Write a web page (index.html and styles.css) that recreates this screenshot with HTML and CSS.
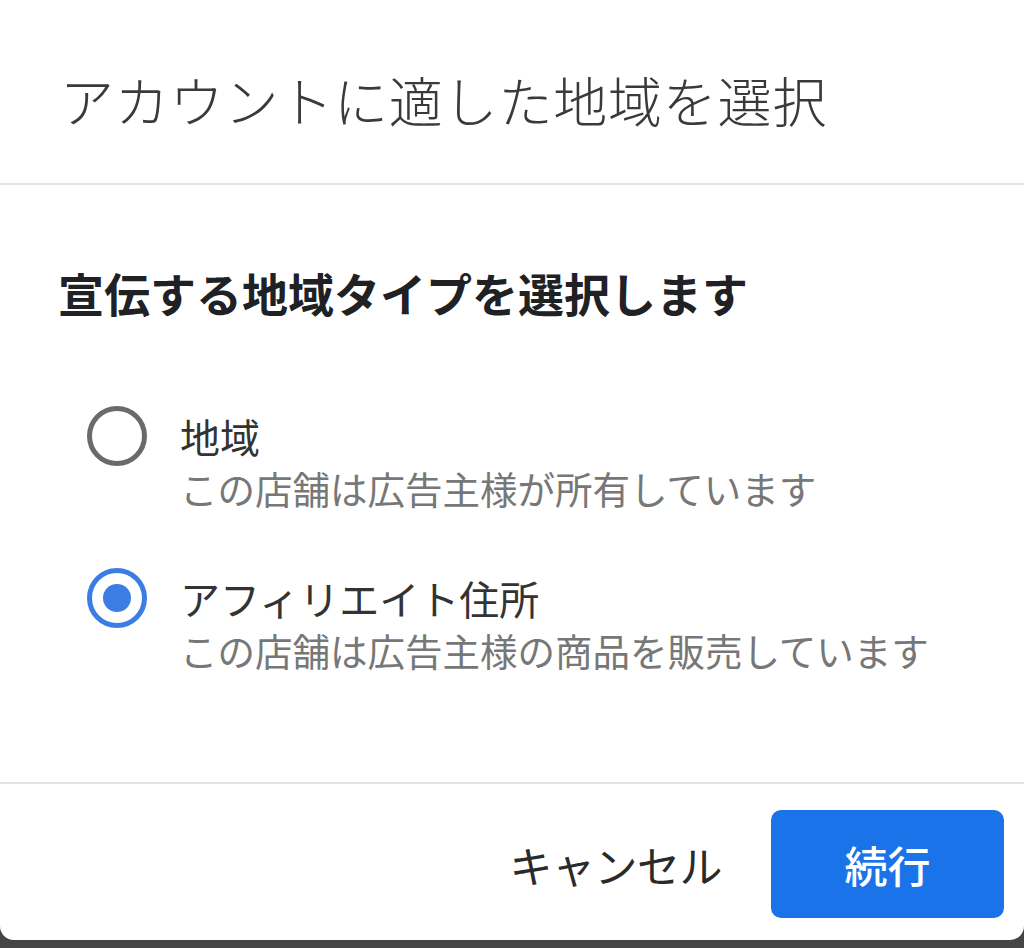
FILE: index.html
```html
<!DOCTYPE html>
<html lang="ja">
<head>
<meta charset="utf-8">
<title>アカウントに適した地域を選択</title>
<link rel="stylesheet" href="styles.css">
</head>
<body>
<div class="dialog">
  <header class="header">
    <h1 class="title">アカウントに適した地域を選択</h1>
  </header>
  <main class="content">
    <h2 class="subtitle">宣伝する地域タイプを選択します</h2>
    <div class="options">
      <label class="option">
        <span class="radio"></span>
        <span class="text">
          <span class="label">地域</span>
          <span class="desc">この店舗は広告主様が所有しています</span>
        </span>
      </label>
      <label class="option">
        <span class="radio checked"></span>
        <span class="text">
          <span class="label">アフィリエイト住所</span>
          <span class="desc">この店舗は広告主様の商品を販売しています</span>
        </span>
      </label>
    </div>
  </main>
  <footer class="footer">
    <button class="btn-cancel">キャンセル</button>
    <button class="btn-primary">続行</button>
  </footer>
</div>
</body>
</html>
```

FILE: styles.css
```css
html, body {
  margin: 0;
  padding: 0;
}
body {
  background: #454545;
  font-family: "Noto Sans CJK JP", "Noto Sans", sans-serif;
  height: 948px;
  overflow: hidden;
}
.dialog {
  background: #fff;
  height: 940px;
  display: flex;
  flex-direction: column;
  border-radius: 0 0 14px 14px;
}
.header {
  height: 185px;
  box-sizing: border-box;
  padding: 73px 0 0 60px;
  border-bottom: 2px solid #e3e3e3;
}
.title {
  margin: 0;
  font-size: 54px;
  line-height: 54px;
  font-weight: 300;
  color: #3a3a3a;
  letter-spacing: 0.8px;
}
.content {
  flex: 1;
  padding: 84px 0 0 58px;
}
.subtitle {
  margin: 0;
  font-size: 46px;
  line-height: 46px;
  font-weight: 700;
  color: #202124;
}
.options {
  margin-top: 97px;
  display: flex;
  flex-direction: column;
  gap: 58px;
}
.option {
  display: flex;
  align-items: flex-start;
}
.radio {
  width: 60px;
  height: 60px;
  box-sizing: border-box;
  border: 5px solid #6a6a6a;
  border-radius: 50%;
  margin: -6px 0 0 29px;
  flex: none;
  display: flex;
  align-items: center;
  justify-content: center;
}
.radio.checked {
  border-color: #3b7de3;
}
.radio.checked::after {
  content: "";
  width: 28px;
  height: 28px;
  border-radius: 50%;
  background: #3b7de3;
}
.text {
  margin-left: 33px;
  display: flex;
  flex-direction: column;
}
.label {
  font-size: 40px;
  line-height: 48px;
  color: #333;
}
.desc {
  font-size: 37.5px;
  line-height: 56px;
  color: #777;
}
.footer {
  height: 158px;
  box-sizing: border-box;
  border-top: 2px solid #e3e3e3;
  padding: 26px 20px 0 0;
  display: flex;
  justify-content: flex-end;
  align-items: flex-start;
  gap: 49px;
}
.btn-cancel,
.btn-primary {
  font-family: inherit;
  border: none;
  cursor: pointer;
  height: 108px;
  font-size: 43px;
  padding: 0;
  white-space: nowrap;
}
.btn-cancel {
  background: none;
  color: #2a2a2a;
  letter-spacing: -0.5px;
}
.btn-primary {
  width: 233px;
  background: #1a73e8;
  color: #fff;
  border-radius: 10px;
  font-weight: 500;
}
```
